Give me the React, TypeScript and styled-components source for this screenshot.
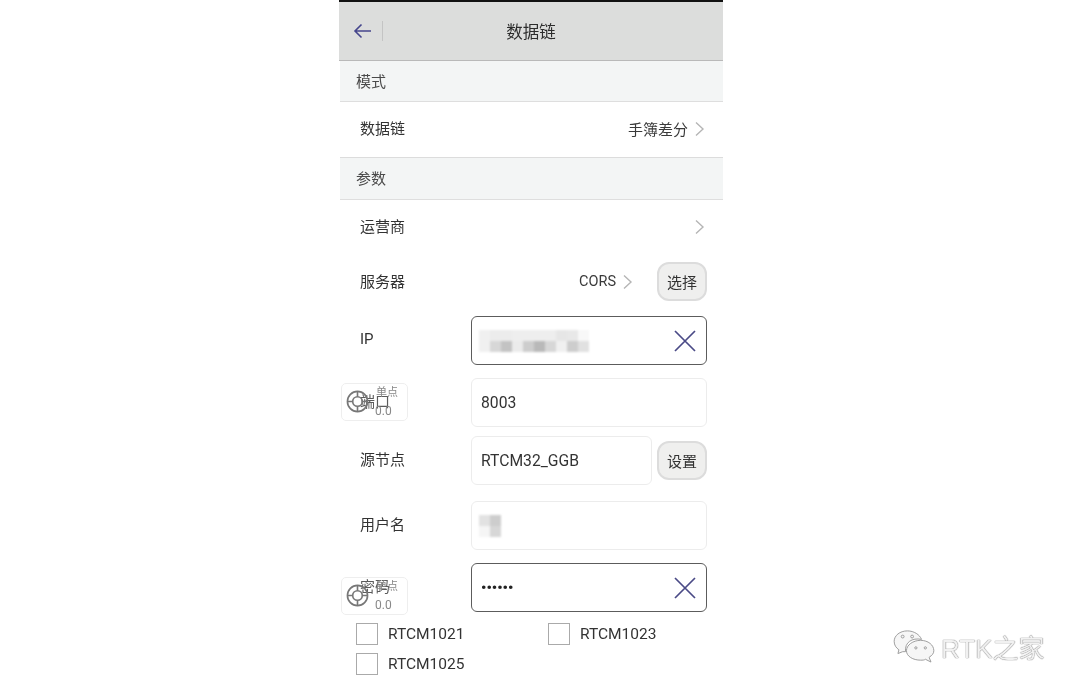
import styled, { createGlobalStyle } from "styled-components";

const GlobalStyle = createGlobalStyle`
  html, body {
    margin: 0;
    padding: 0;
    background: #fff;
  }
  body {
    font-family: Roboto, "Noto Sans CJK SC", sans-serif;
    color: #333;
  }
`;

const Page = styled.div`
  position: relative;
  width: 1080px;
  height: 691px;
  overflow: hidden;
  padding-left: 340px;
  box-sizing: border-box;
  background: #fff;
`;

const Phone = styled.main`
  position: relative;
  width: 383px;
  height: 691px;
  filter: blur(0.6px);
`;

const Header = styled.header`
  height: 61px;
  box-sizing: border-box;
  display: grid;
  grid-template-columns: 44px 1fr 44px;
  align-items: center;
  background: #dcdddc;
  border-top: 2px solid #111;
  border-bottom: 1px solid #b9b9b9;
  margin-left: -1px;
`;

const BackButton = styled.div`
  height: 20px;
  display: flex;
  align-items: center;
  padding-left: 14px;
  border-right: 1px solid #c4c4c4;
`;

const Title = styled.h1`
  margin: 0;
  text-align: center;
  font-size: 16.5px;
  font-weight: 400;
  color: #2c2c2c;
`;

const Section = styled.div<{ $height: number }>`
  height: ${(p) => p.$height}px;
  box-sizing: border-box;
  display: flex;
  align-items: center;
  padding: 0 0 2px 16px;
  font-size: 15px;
  color: #4a4a4a;
  background: #f3f5f5;
  border-bottom: 1px solid #dedede;
`;

const Row = styled.div<{ $divided?: boolean }>`
  height: 55px;
  box-sizing: ${(p) => (p.$divided ? "content-box" : "border-box")};
  display: flex;
  align-items: center;
  padding: 0 16px 0 20px;
  font-size: 15px;
  color: #333;
  border-bottom: ${(p) => (p.$divided ? "1px solid #dcdcdc" : "none")};
`;

const RowText = styled.span`
  margin-bottom: 4px;
`;

const RowValue = styled.div<{ $inset?: boolean }>`
  margin: 0 ${(p) => (p.$inset ? "2px" : "0")} 2px auto;
  display: flex;
  align-items: center;
  gap: 6px;
  font-size: 15px;
  color: #3a3a3a;
`;

const LatinValue = styled.span`
  font-size: 14.5px;
`;

const Field = styled.div<{ $gap: number }>`
  display: grid;
  grid-template-columns: 111px 1fr;
  align-items: center;
  margin-top: ${(p) => p.$gap}px;
  padding: 0 16px 0 20px;
  font-size: 15px;
`;

const FieldLabel = styled.label`
  color: #333;
  margin-bottom: 4px;
`;

const InputWrap = styled.div`
  display: flex;
  align-items: center;
  gap: 5px;
`;

const Input = styled.div<{ $focused?: boolean }>`
  flex: 1;
  height: 49px;
  box-sizing: border-box;
  display: flex;
  align-items: center;
  justify-content: space-between;
  padding: 0 9px;
  border: 1.5px solid ${(p) => (p.$focused ? "#5c5c5c" : "#ececec")};
  border-radius: 6px;
  background: #fff;
  font-size: 15.7px;
  color: #333;
`;

const Dots = styled.span`
  font-size: 15px;
  color: #222;
  font-weight: 700;
`;

const Button = styled.div<{ $spaced?: boolean }>`
  width: 50px;
  height: 39px;
  box-sizing: border-box;
  flex: none;
  display: flex;
  align-items: center;
  justify-content: center;
  font-size: 15px;
  color: #333;
  background: #efefee;
  border: 2px solid #dcdcdc;
  border-radius: 12px;
  margin-left: ${(p) => (p.$spaced ? "18px" : "0")};
`;

const Mosaic = styled.div<{ $columns: number }>`
  display: grid;
  grid-template-columns: repeat(${(p) => p.$columns}, 11px);
  grid-auto-rows: 11px;
  margin-left: -2px;
  filter: blur(0.8px);
`;

const MosaicCell = styled.i<{ $shade: number }>`
  display: block;
  background: ${(p) => `rgb(${p.$shade},${p.$shade},${p.$shade})`};
`;

const Options = styled.div`
  display: grid;
  grid-template-columns: 192px 1fr;
  grid-auto-rows: 30px;
  align-items: center;
  margin-top: 7px;
  padding-left: 16px;
`;

const Option = styled.div`
  display: flex;
  align-items: center;
  gap: 10px;
  font-size: 15.5px;
  color: #333;
`;

const Checkbox = styled.span`
  width: 22px;
  height: 22px;
  box-sizing: border-box;
  border: 1.5px solid #aaa;
  background: #fff;
`;

const StatusBadge = styled.div<{ $top: number }>`
  position: absolute;
  left: 1px;
  top: ${(p) => p.$top}px;
  width: 67px;
  height: 38px;
  box-sizing: border-box;
  border: 1px solid #eeeeee;
  border-radius: 5px;
  background: rgba(255, 255, 255, 0.2);
  color: #777;
`;

const BadgeIcon = styled.svg`
  position: absolute;
  left: 4px;
  top: 6px;
`;

const BadgeMode = styled.span`
  position: absolute;
  left: 34px;
  top: -1px;
  font-size: 11px;
  color: #888;
`;

const BadgeValue = styled.span`
  position: absolute;
  left: 33px;
  top: 20px;
  font-size: 12px;
  color: #888;
`;

const Watermark = styled.div`
  position: absolute;
  left: 892px;
  top: 627px;
  display: flex;
  align-items: center;
  gap: 5px;
  font-family: "Liberation Sans", "Noto Sans CJK SC", sans-serif;
  font-size: 26px;
  color: #f1f1f1;
  text-shadow: 0 0 1px #777, 0 0 1px #777;
  filter: blur(0.5px);
`;

const WatermarkLabel = styled.span`
  margin-top: 1px;
`;

const Chevron = () => (
  <svg width="11" height="16" viewBox="0 0 11 16" fill="none" stroke="#b5b5b5" strokeWidth="1.4">
    <path d="M2 1.5 L9 8 L2 14.5" />
  </svg>
);

const Clear = () => (
  <svg width="24" height="24" viewBox="0 0 24 24" fill="none" stroke="#4a4a86" strokeWidth="1.7">
    <path d="M2 2 L22 22 M22 2 L2 22" />
  </svg>
);

const Badge = ({ top }: { top: number }) => (
  <StatusBadge $top={top}>
    <BadgeIcon width="23" height="23" viewBox="0 0 24 24" fill="none" stroke="#777" strokeWidth="1.7">
      <circle cx="12" cy="12" r="10.5" />
      <circle cx="12" cy="12" r="5" />
      <path d="M12 1.5 V7 M12 17 V22.5 M1.5 12 H7 M17 12 H22.5" />
    </BadgeIcon>
    <BadgeMode>单点</BadgeMode>
    <BadgeValue>0.0</BadgeValue>
  </StatusBadge>
);

const ipShades = [
  [240, 236, 236, 238, 238, 238, 238, 230, 232, 248],
  [240, 215, 195, 235, 205, 185, 215, 240, 205, 225],
];

const userShades = [
  [226, 205],
  [245, 215],
];

const App = () => {
  return (
    <>
      <GlobalStyle />
      <Page>
        <Phone>
          <Header>
            <BackButton>
              <svg width="20" height="16" viewBox="0 0 20 16" fill="none" stroke="#45458c" strokeWidth="1.6">
                <path d="M18 8 H2 M8.5 1.5 L2 8 L8.5 14.5" />
              </svg>
            </BackButton>
            <Title>数据链</Title>
          </Header>
          <Section $height={41}>模式</Section>
          <Row $divided>
            <RowText>数据链</RowText>
            <RowValue $inset>
              手簿差分
              <Chevron />
            </RowValue>
          </Row>
          <Section $height={42}>参数</Section>
          <Row>
            <RowText>运营商</RowText>
            <RowValue $inset>
              <Chevron />
            </RowValue>
          </Row>
          <Row>
            <RowText>服务器</RowText>
            <RowValue>
              <LatinValue>CORS</LatinValue>
              <Chevron />
              <Button $spaced>选择</Button>
            </RowValue>
          </Row>
          <Field $gap={6}>
            <FieldLabel>IP</FieldLabel>
            <InputWrap>
              <Input $focused>
                <Mosaic $columns={10}>
                  {ipShades.flat().map((shade, i) => (
                    <MosaicCell key={i} $shade={shade} />
                  ))}
                </Mosaic>
                <Clear />
              </Input>
            </InputWrap>
          </Field>
          <Field $gap={13}>
            <FieldLabel>端口</FieldLabel>
            <InputWrap>
              <Input>8003</Input>
            </InputWrap>
          </Field>
          <Field $gap={9}>
            <FieldLabel>源节点</FieldLabel>
            <InputWrap>
              <Input>RTCM32_GGB</Input>
              <Button>设置</Button>
            </InputWrap>
          </Field>
          <Field $gap={16}>
            <FieldLabel>用户名</FieldLabel>
            <InputWrap>
              <Input>
                <Mosaic $columns={2}>
                  {userShades.flat().map((shade, i) => (
                    <MosaicCell key={i} $shade={shade} />
                  ))}
                </Mosaic>
              </Input>
            </InputWrap>
          </Field>
          <Field $gap={13}>
            <FieldLabel>密码</FieldLabel>
            <InputWrap>
              <Input $focused>
                <Dots>••••••</Dots>
                <Clear />
              </Input>
            </InputWrap>
          </Field>
          <Options>
            <Option>
              <Checkbox />
              RTCM1021
            </Option>
            <Option>
              <Checkbox />
              RTCM1023
            </Option>
            <Option>
              <Checkbox />
              RTCM1025
            </Option>
          </Options>
          <Badge top={383} />
          <Badge top={577} />
        </Phone>
        <Watermark>
          <svg width="44" height="34" viewBox="0 0 46 36" fill="#f6f6f6" stroke="#999" strokeWidth="1">
            <path d="M16 2 C8 2 2 7 2 13 C2 17 4 20 7 22 L6 26 L11 24 C12 24 13 24 14 24 C13 14 21 9 31 11 C29 6 23 2 16 2 Z" />
            <path d="M30 12 C22 12 15 17 15 23 C15 29 22 33 30 33 C32 33 34 33 35 32 L41 35 L39 30 C42 28 44 26 44 23 C44 17 38 12 30 12 Z" />
            <circle cx="11" cy="8" r="1.5" />
            <circle cx="21" cy="8" r="1.5" />
            <circle cx="25" cy="20" r="1.2" />
            <circle cx="35" cy="20" r="1.2" />
          </svg>
          <WatermarkLabel>RTK之家</WatermarkLabel>
        </Watermark>
      </Page>
    </>
  );
};

export default App;
